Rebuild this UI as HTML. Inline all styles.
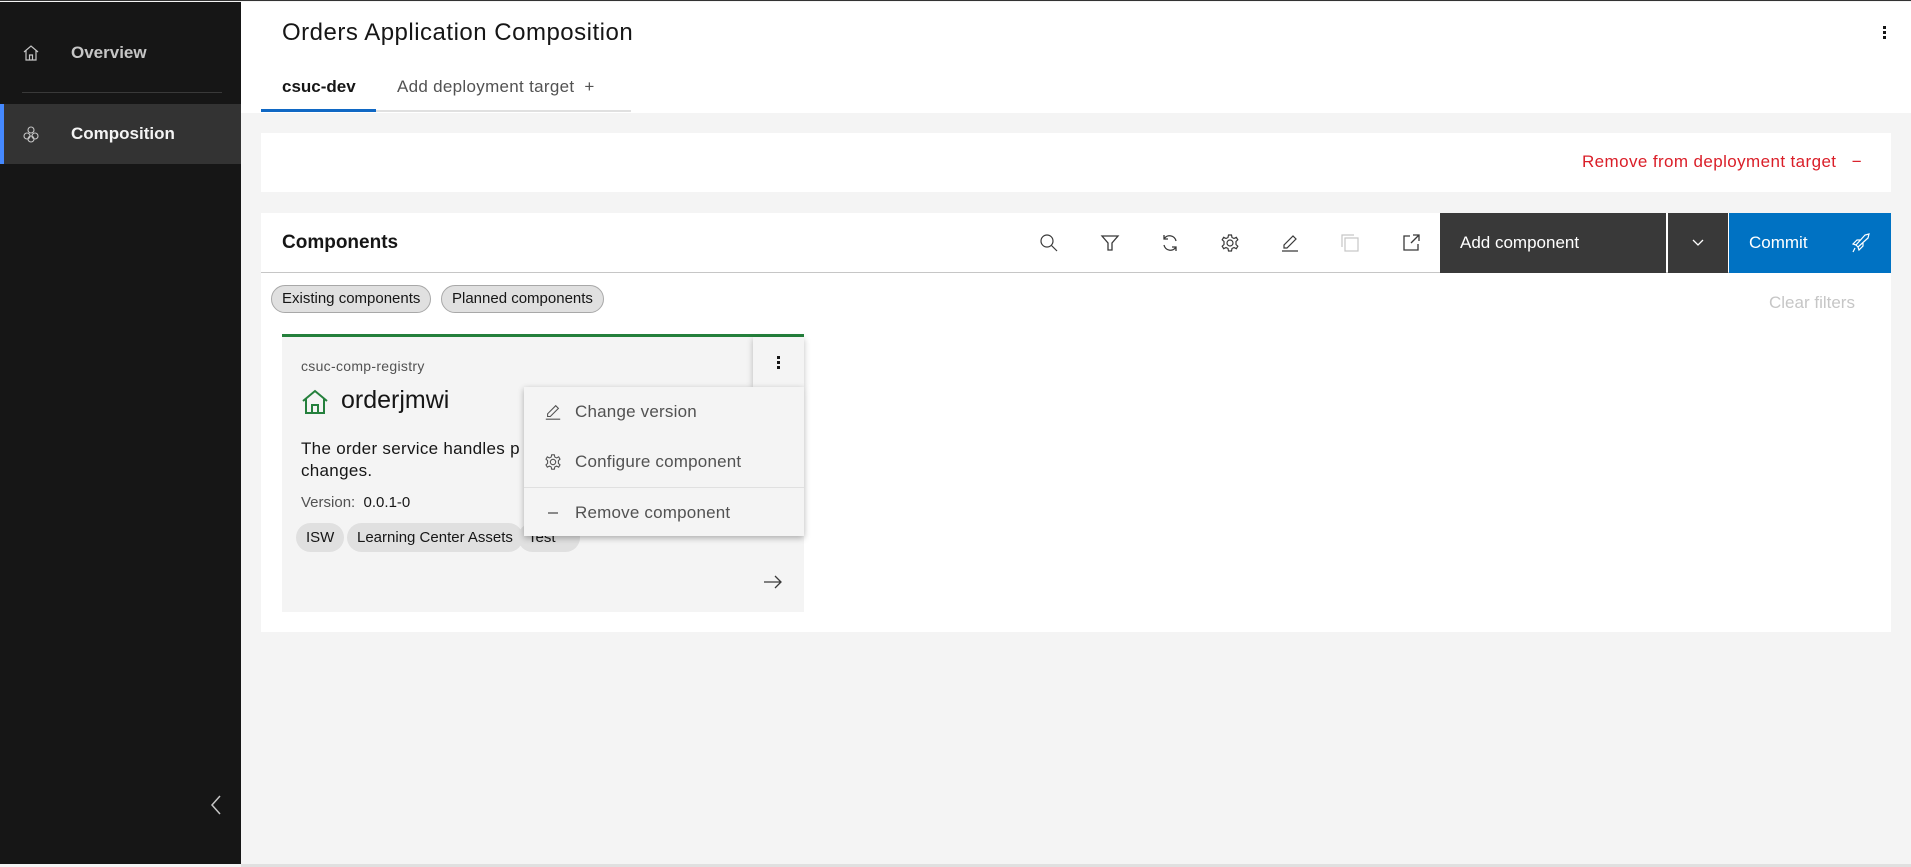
<!DOCTYPE html>
<html><head><meta charset="utf-8"><style>
*{box-sizing:border-box;margin:0;padding:0}
body{width:1911px;height:866px;overflow:hidden;background:#f4f4f4;font-family:"Liberation Sans",sans-serif;color:#161616;position:relative;border-top:1px solid #333}
.abs{position:absolute}
.side{left:0;top:1px;width:241px;height:862px;background:#161616}
.side .it{position:absolute;left:0;width:241px;height:60px;display:flex;align-items:center;color:#c6c6c6;font-size:17px;font-weight:bold}
.side .it span{position:absolute;left:71px}
.side .it svg{position:absolute;left:22px}
.hdr{left:241px;top:1px;width:1670px;height:111px;background:#fff}
.white{background:#fff}
svg{display:block}
.ico{position:absolute;top:232px}
.tag{position:absolute;height:28px;border:1px solid #a8a8a8;background:#e0e0e0;border-radius:14px;font-size:15px;line-height:26px;padding:0 10px;color:#161616}
.ctag{position:absolute;top:522px;height:29px;background:#e0e0e0;border-radius:15px;font-size:15px;line-height:29px;padding:0 10px}
.mi{position:absolute;left:524px;width:280px;height:50px;display:flex;align-items:center;font-size:17px;color:#525252;letter-spacing:0.2px}
.mi span{position:absolute;left:51px}
.mi svg{position:absolute;left:20px}
</style></head><body>
<div class="abs side">
  <div class="it" style="top:21px"><svg width="18" height="18" viewBox="0 0 18 18" fill="none" stroke="#c6c6c6" stroke-width="1.2"><path d="M2 8 L9 2 L16 8 M4 6.5 V16 H14 V6.5 M7.5 16 V11 H10.5 V16"/></svg><span>Overview</span></div>
  <div class="abs" style="left:22px;top:90px;width:200px;height:1px;background:#393939"></div>
  <div class="it" style="top:102px;background:#333;border-left:4px solid #4589ff;color:#f4f4f4"><svg width="18" height="18" viewBox="0 0 18 18" fill="none" stroke="#c6c6c6" stroke-width="1.1" style="left:18px"><circle cx="9" cy="5" r="3"/><circle cx="5" cy="11" r="3"/><circle cx="13" cy="11" r="3"/><circle cx="9" cy="14" r="3"/></svg><span style="left:67px">Composition</span></div>
  <svg class="abs" style="left:209px;top:793px" width="14" height="20" viewBox="0 0 14 20" fill="none" stroke="#c6c6c6" stroke-width="1.5"><path d="M11 1 L3 10 L11 19"/></svg>
</div>
<div class="abs hdr"></div>
<div class="abs" style="left:282px;top:18px;font-size:24px;color:#161616;letter-spacing:0.5px">Orders Application Composition</div>
<div class="abs" style="left:1883px;top:25px;width:3px;height:3px;background:#161616;box-shadow:0 5px 0 #161616,0 10px 0 #161616"></div>
<div class="abs" style="left:282px;top:76px;font-size:17px;font-weight:bold">csuc-dev</div>
<div class="abs" style="left:397px;top:76px;font-size:17px;color:#525252;letter-spacing:0.3px">Add deployment target &nbsp;+</div>
<div class="abs" style="left:261px;top:109px;width:370px;height:2px;background:#e0e0e0"></div>
<div class="abs" style="left:261px;top:108px;width:115px;height:3px;background:#1068c4"></div>

<div class="abs white" style="left:261px;top:132px;width:1630px;height:59px"></div>
<div class="abs" style="left:1582px;top:151px;font-size:17px;color:#da1e28;letter-spacing:0.4px">Remove from deployment target &nbsp;&nbsp;−</div>

<div class="abs white" style="left:261px;top:212px;width:1630px;height:419px"></div>
<div class="abs" style="left:261px;top:271px;width:1630px;height:1px;background:#c6c6c6"></div>
<div class="abs" style="left:282px;top:231px;font-size:19px;font-weight:bold">Components</div>
<svg class="ico" style="left:1039px" width="20" height="20" viewBox="0 0 20 20" fill="none" stroke="#393939" stroke-width="1.2"><circle cx="8" cy="8" r="6"/><path d="M12.5 12.5 L18 18"/></svg>
<svg class="ico" style="left:1100px" width="20" height="20" viewBox="0 0 20 20" fill="none" stroke="#393939" stroke-width="1.3"><path d="M2 3 H18 L12 10 V17 H8 V10 Z"/></svg>
<svg class="ico" style="left:1160px" width="20" height="20" viewBox="0 0 20 20" fill="none" stroke="#393939" stroke-width="1.3"><path d="M16 8 A6.5 6.5 0 0 0 4 6 M4 2 V6 H8 M4 12 A6.5 6.5 0 0 0 16 14 M16 18 V14 H12"/></svg>
<svg class="ico" style="left:1220px" width="20" height="20" viewBox="0 0 20 20" fill="none" stroke="#393939" stroke-width="1.2"><circle cx="10" cy="10" r="3"/><path d="M8.5 2 H11.5 L12 4.5 L14 5.5 L16.3 4.3 L17.8 6.8 L16 8.5 V11.5 L17.8 13.2 L16.3 15.7 L14 14.5 L12 15.5 L11.5 18 H8.5 L8 15.5 L6 14.5 L3.7 15.7 L2.2 13.2 L4 11.5 V8.5 L2.2 6.8 L3.7 4.3 L6 5.5 L8 4.5 Z"/></svg>
<svg class="ico" style="left:1280px" width="20" height="20" viewBox="0 0 20 20" fill="none" stroke="#393939" stroke-width="1.2"><path d="M2 18 H18 M4 15 V12 L13 3 L16 6 L7 15 Z"/></svg>
<svg class="ico" style="left:1340px" width="20" height="20" viewBox="0 0 20 20" fill="none" stroke="#c6c6c6" stroke-width="1.2"><path d="M2 14 V2 H14"/><rect x="5" y="5" width="13" height="13"/></svg>
<svg class="ico" style="left:1401px" width="20" height="20" viewBox="0 0 20 20" fill="none" stroke="#393939" stroke-width="1.3"><path d="M9 3 H3 V17 H17 V11 M12 2 H18 V8 M18 2 L10 10"/></svg>
<div class="abs" style="left:1440px;top:212px;width:226px;height:60px;background:#393939;color:#fff;font-size:17px;line-height:60px;padding-left:20px">Add component</div>
<div class="abs" style="left:1668px;top:212px;width:60px;height:60px;background:#393939"></div>
<svg class="abs" style="left:1691px;top:237px" width="14" height="10" viewBox="0 0 14 10" fill="none" stroke="#fff" stroke-width="1.3"><path d="M2 2 L7 7 L12 2"/></svg>
<div class="abs" style="left:1729px;top:212px;width:162px;height:60px;background:#0072c3;color:#fff;font-size:17px;line-height:60px;padding-left:20px">Commit</div>
<svg class="abs" style="left:1851px;top:231px" width="20" height="22" viewBox="0 0 20 22" fill="none" stroke="#fff" stroke-width="1.2"><path d="M7 15 L5 13 L14 3 L18 2 L17 6 L7 15 Z M5 13 L2 12 L6 8 H9 M7 15 L8 18 L12 14 V11 M4 16 L2 20"/></svg>
<div class="tag" style="left:271px;top:284px">Existing components</div>
<div class="tag" style="left:441px;top:284px">Planned components</div>
<div class="abs" style="left:1769px;top:292px;font-size:17px;color:#c6c6c6">Clear filters</div>

<div class="abs" style="left:282px;top:333px;width:522px;height:278px;background:#f4f4f4;border-top:3px solid #24803c"></div>
<div class="abs" style="left:301px;top:357px;font-size:14px;color:#525252;letter-spacing:0.3px">csuc-comp-registry</div>
<svg class="abs" style="left:301px;top:388px" width="28" height="26" viewBox="0 0 28 26" fill="none" stroke="#24803c" stroke-width="2"><path d="M2 12 L14 2 L26 12 M5 9.5 V24 H23 V9.5 M11 24 V16 H17 V24"/></svg>
<div class="abs" style="left:341px;top:385px;font-size:25px">orderjmwi</div>
<div class="abs" style="left:301px;top:437px;font-size:17px;line-height:22px;letter-spacing:0.3px">The order service handles p<br>changes.</div>
<div class="abs" style="left:301px;top:493px;font-size:15px;color:#525252">Version: &nbsp;<span style="color:#161616">0.0.1-0</span></div>
<div class="ctag" style="left:296px">ISW</div>
<div class="ctag" style="left:347px">Learning Center Assets</div>
<div class="ctag" style="left:518px;width:62px">Test</div>
<svg class="abs" style="left:763px;top:573px" width="20" height="16" viewBox="0 0 20 16" fill="none" stroke="#393939" stroke-width="1.3"><path d="M1 8 H18 M12 2 L18 8 L12 14"/></svg>
<div class="abs" style="left:753px;top:336px;width:51px;height:50px;background:#f4f4f4;box-shadow:0 2px 6px rgba(0,0,0,.25)"></div>
<div class="abs" style="left:777px;top:355px;width:3px;height:3px;background:#161616;box-shadow:0 5px 0 #161616,0 10px 0 #161616"></div>
<div class="abs" style="left:524px;top:386px;width:280px;height:149px;background:#f4f4f4;box-shadow:0 2px 6px rgba(0,0,0,.3)"></div>
<div class="abs" style="left:524px;top:486px;width:280px;height:1px;background:#e0e0e0"></div>
<div class="mi" style="top:386px"><svg width="18" height="18" viewBox="0 0 20 20" fill="none" stroke="#525252" stroke-width="1.2"><path d="M2 18 H18 M4 15 V12 L13 3 L16 6 L7 15 Z"/></svg><span>Change version</span></div>
<div class="mi" style="top:436px"><svg width="18" height="18" viewBox="0 0 20 20" fill="none" stroke="#525252" stroke-width="1.2"><circle cx="10" cy="10" r="3"/><path d="M8.5 2 H11.5 L12 4.5 L14 5.5 L16.3 4.3 L17.8 6.8 L16 8.5 V11.5 L17.8 13.2 L16.3 15.7 L14 14.5 L12 15.5 L11.5 18 H8.5 L8 15.5 L6 14.5 L3.7 15.7 L2.2 13.2 L4 11.5 V8.5 L2.2 6.8 L3.7 4.3 L6 5.5 L8 4.5 Z"/></svg><span>Configure component</span></div>
<div class="mi" style="top:487px"><svg width="18" height="18" viewBox="0 0 18 18" fill="none" stroke="#525252" stroke-width="1.3"><path d="M4 9 H14"/></svg><span>Remove component</span></div>
<div class="abs" style="left:241px;top:863px;width:1670px;height:3px;background:#e0e0e0"></div>
</body></html>
